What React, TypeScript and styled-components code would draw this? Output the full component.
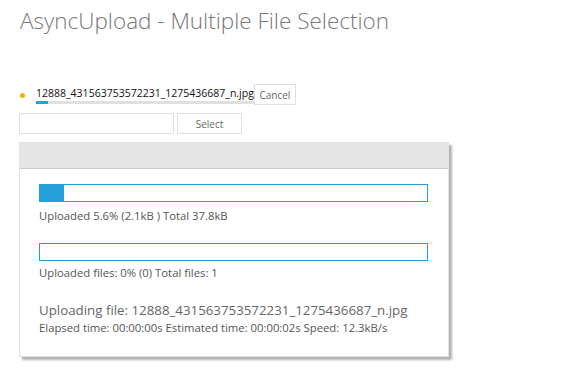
import { createGlobalStyle, styled } from "styled-components";

const GlobalStyle = createGlobalStyle`
  html, body {
    margin: 0;
    padding: 0;
    background: #ffffff;
  }
  body {
    font-family: "Open Sans", "Noto Sans", sans-serif;
    color: #555555;
  }
`;

const Page = styled.div`
  width: 573px;
  height: 382px;
  padding: 0 0 0 19px;
  box-sizing: border-box;
  overflow: hidden;
`;

const Title = styled.h1`
  margin: 0;
  padding: 8px 0 0 1px;
  font-size: 22.5px;
  font-weight: 300;
  line-height: 26px;
  color: #777777;
`;

const FileList = styled.ul`
  list-style: none;
  margin: 50px 0 0 0;
  padding: 0;
`;

const FileRow = styled.li`
  display: flex;
  align-items: flex-start;
  height: 21px;
`;

const Dot = styled.span`
  width: 5px;
  height: 5px;
  border-radius: 50%;
  background: #f0b400;
  margin: 9px 11px 0 1px;
`;

const FileBlock = styled.div`
  display: flex;
  flex-direction: column;
  padding-top: 3px;
`;

const FileName = styled.span`
  font-size: 10.5px;
  line-height: 13px;
  color: #111111;
  white-space: nowrap;
`;

const SmallBar = styled.div`
  height: 3px;
  margin-top: 1px;
  background: #e0e0e0;
`;

const SmallFill = styled.div`
  height: 100%;
  background: #25a0da;
`;

const Button = styled.button<{ $w: number }>`
  width: ${(p) => p.$w}px;
  height: 21px;
  padding: 0;
  background: #ffffff;
  border: 1px solid #e0e0e0;
  font-family: inherit;
  font-size: 10px;
  color: #666666;
  cursor: pointer;
`;

const SelectRow = styled.div`
  display: flex;
  gap: 3px;
  margin-top: 8px;
`;

const FileInput = styled.div`
  width: 155px;
  height: 21px;
  box-sizing: border-box;
  border: 1px solid #e0e0e0;
`;

const Panel = styled.div`
  width: 430px;
  margin-top: 8px;
  border: 1px solid #e2e2e2;
  box-sizing: border-box;
  background: #ffffff;
  box-shadow: 3px 3px 2px rgba(0, 0, 0, 0.3);
`;

const PanelHead = styled.div`
  height: 25px;
  background: #e6e6e6;
  border-bottom: 1px solid #cccccc;
`;

const PanelBody = styled.div`
  padding: 15px 20px 21px 19px;
`;

const BigBar = styled.div<{ $top?: number }>`
  width: 389px;
  height: 18px;
  margin-top: ${(p) => p.$top ?? 0}px;
  box-sizing: border-box;
  border: 1px solid #25a0da;
`;

const BigFill = styled.div`
  height: 100%;
  background: #25a0da;
`;

const Info = styled.div<{ $top: number }>`
  margin-top: ${(p) => p.$top}px;
  font-size: 11.3px;
  line-height: 14px;
  color: #555555;
  white-space: nowrap;
`;

const Uploading = styled.div`
  margin-top: 21px;
  font-size: 13.3px;
  line-height: 18px;
  color: #666666;
  white-space: nowrap;
`;

const fileName = "12888_431563753572231_1275436687_n.jpg";

export default function App() {
  return (
    <Page>
      <GlobalStyle />
      <Title>AsyncUpload - Multiple File Selection</Title>
      <FileList>
        <FileRow>
          <Dot />
          <FileBlock>
            <FileName>{fileName}</FileName>
            <SmallBar>
              <SmallFill style={{ width: "5.6%" }} />
            </SmallBar>
          </FileBlock>
          <Button $w={42}>Cancel</Button>
        </FileRow>
      </FileList>
      <SelectRow>
        <FileInput />
        <Button $w={65}>Select</Button>
      </SelectRow>
      <Panel>
        <PanelHead />
        <PanelBody>
          <BigBar>
            <BigFill style={{ width: "6.2%" }} />
          </BigBar>
          <Info $top={7}>Uploaded 5.6% (2.1kB ) Total 37.8kB</Info>
          <BigBar $top={20} />
          <Info $top={5}>Uploaded files: 0% (0) Total files: 1</Info>
          <Uploading>Uploading file: {fileName}</Uploading>
          <Info $top={2}>Elapsed time: 00:00:00s Estimated time: 00:00:02s Speed: 12.3kB/s</Info>
        </PanelBody>
      </Panel>
    </Page>
  );
}
